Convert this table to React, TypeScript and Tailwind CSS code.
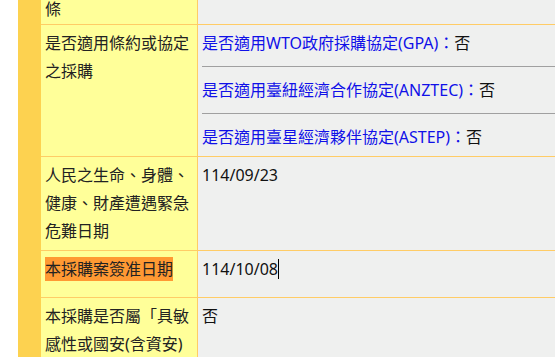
const font = { fontFamily: '"Noto Sans", "Noto Sans CJK TC", sans-serif' }

type Row = { label: React.ReactNode; value: React.ReactNode; className?: string }

function TenderRow({ label, value, className = '' }: Row) {
  return (
    <div className={`flex border-b border-[#ffcc66] ${className}`}>
      <div className="w-[157px] shrink-0 bg-[#ffff99] border-r border-[#ffcc66] pl-1 pr-1 pt-1 text-[#222]">
        {label}
      </div>
      <div className="flex-1 bg-[#eff0ef] pl-1 pt-1 text-[#111]">{value}</div>
    </div>
  )
}

const agreements = [
  '是否適用WTO政府採購協定(GPA)：',
  '是否適用臺紐經濟合作協定(ANZTEC)：',
  '是否適用臺星經濟夥伴協定(ASTEP)：',
]

export default function App() {
  return (
    <div className="w-[555px] h-[357px] overflow-hidden bg-white flex text-[16px] leading-[28px]" style={font}>
      <div className="w-[18px] shrink-0" />
      <div className="w-[23px] shrink-0 bg-[#fdd250]" />
      <div className="flex-1">
        {/* tail of the previous row, scrolled past */}
        <div className="flex h-[25px] border-b border-[#ffcc66] overflow-hidden">
          <div className="w-[157px] shrink-0 bg-[#ffff99] border-r border-[#ffcc66] pl-1 text-[#222]">
            <div className="-mt-[5px]">條</div>
          </div>
          <div className="flex-1 bg-[#eff0ef]" />
        </div>

        <TenderRow
          label={<>是否適用條約或協定之採購</>}
          value={
            <div className="pb-[5px]">
              {agreements.map((a, i) => (
                <div key={a}>
                  {i > 0 && <div className="h-px bg-[#a0a0a0] my-[9px]" />}
                  <div>
                    <span className="text-[#1010e8]">{a}</span>否
                  </div>
                </div>
              ))}
            </div>
          }
        />

        <TenderRow
          className="h-[94px]"
          label={<>人民之生命、身體、健康、財產遭遇緊急危難日期</>}
          value={<>114/09/23</>}
        />

        <TenderRow
          className="h-[47px]"
          label={<span className="bg-[#ff9933] py-[1px]">本採購案簽准日期</span>}
          value={
            <>
              114/10/08
              <span className="inline-block w-px h-[20px] bg-black align-[-4px]" />
            </>
          }
        />

        <TenderRow
          className="h-[80px]"
          label={<>本採購是否屬「具敏感性或國安(含資安)疑慮之業務範疇」採購</>}
          value={<>否</>}
        />
      </div>
    </div>
  )
}
